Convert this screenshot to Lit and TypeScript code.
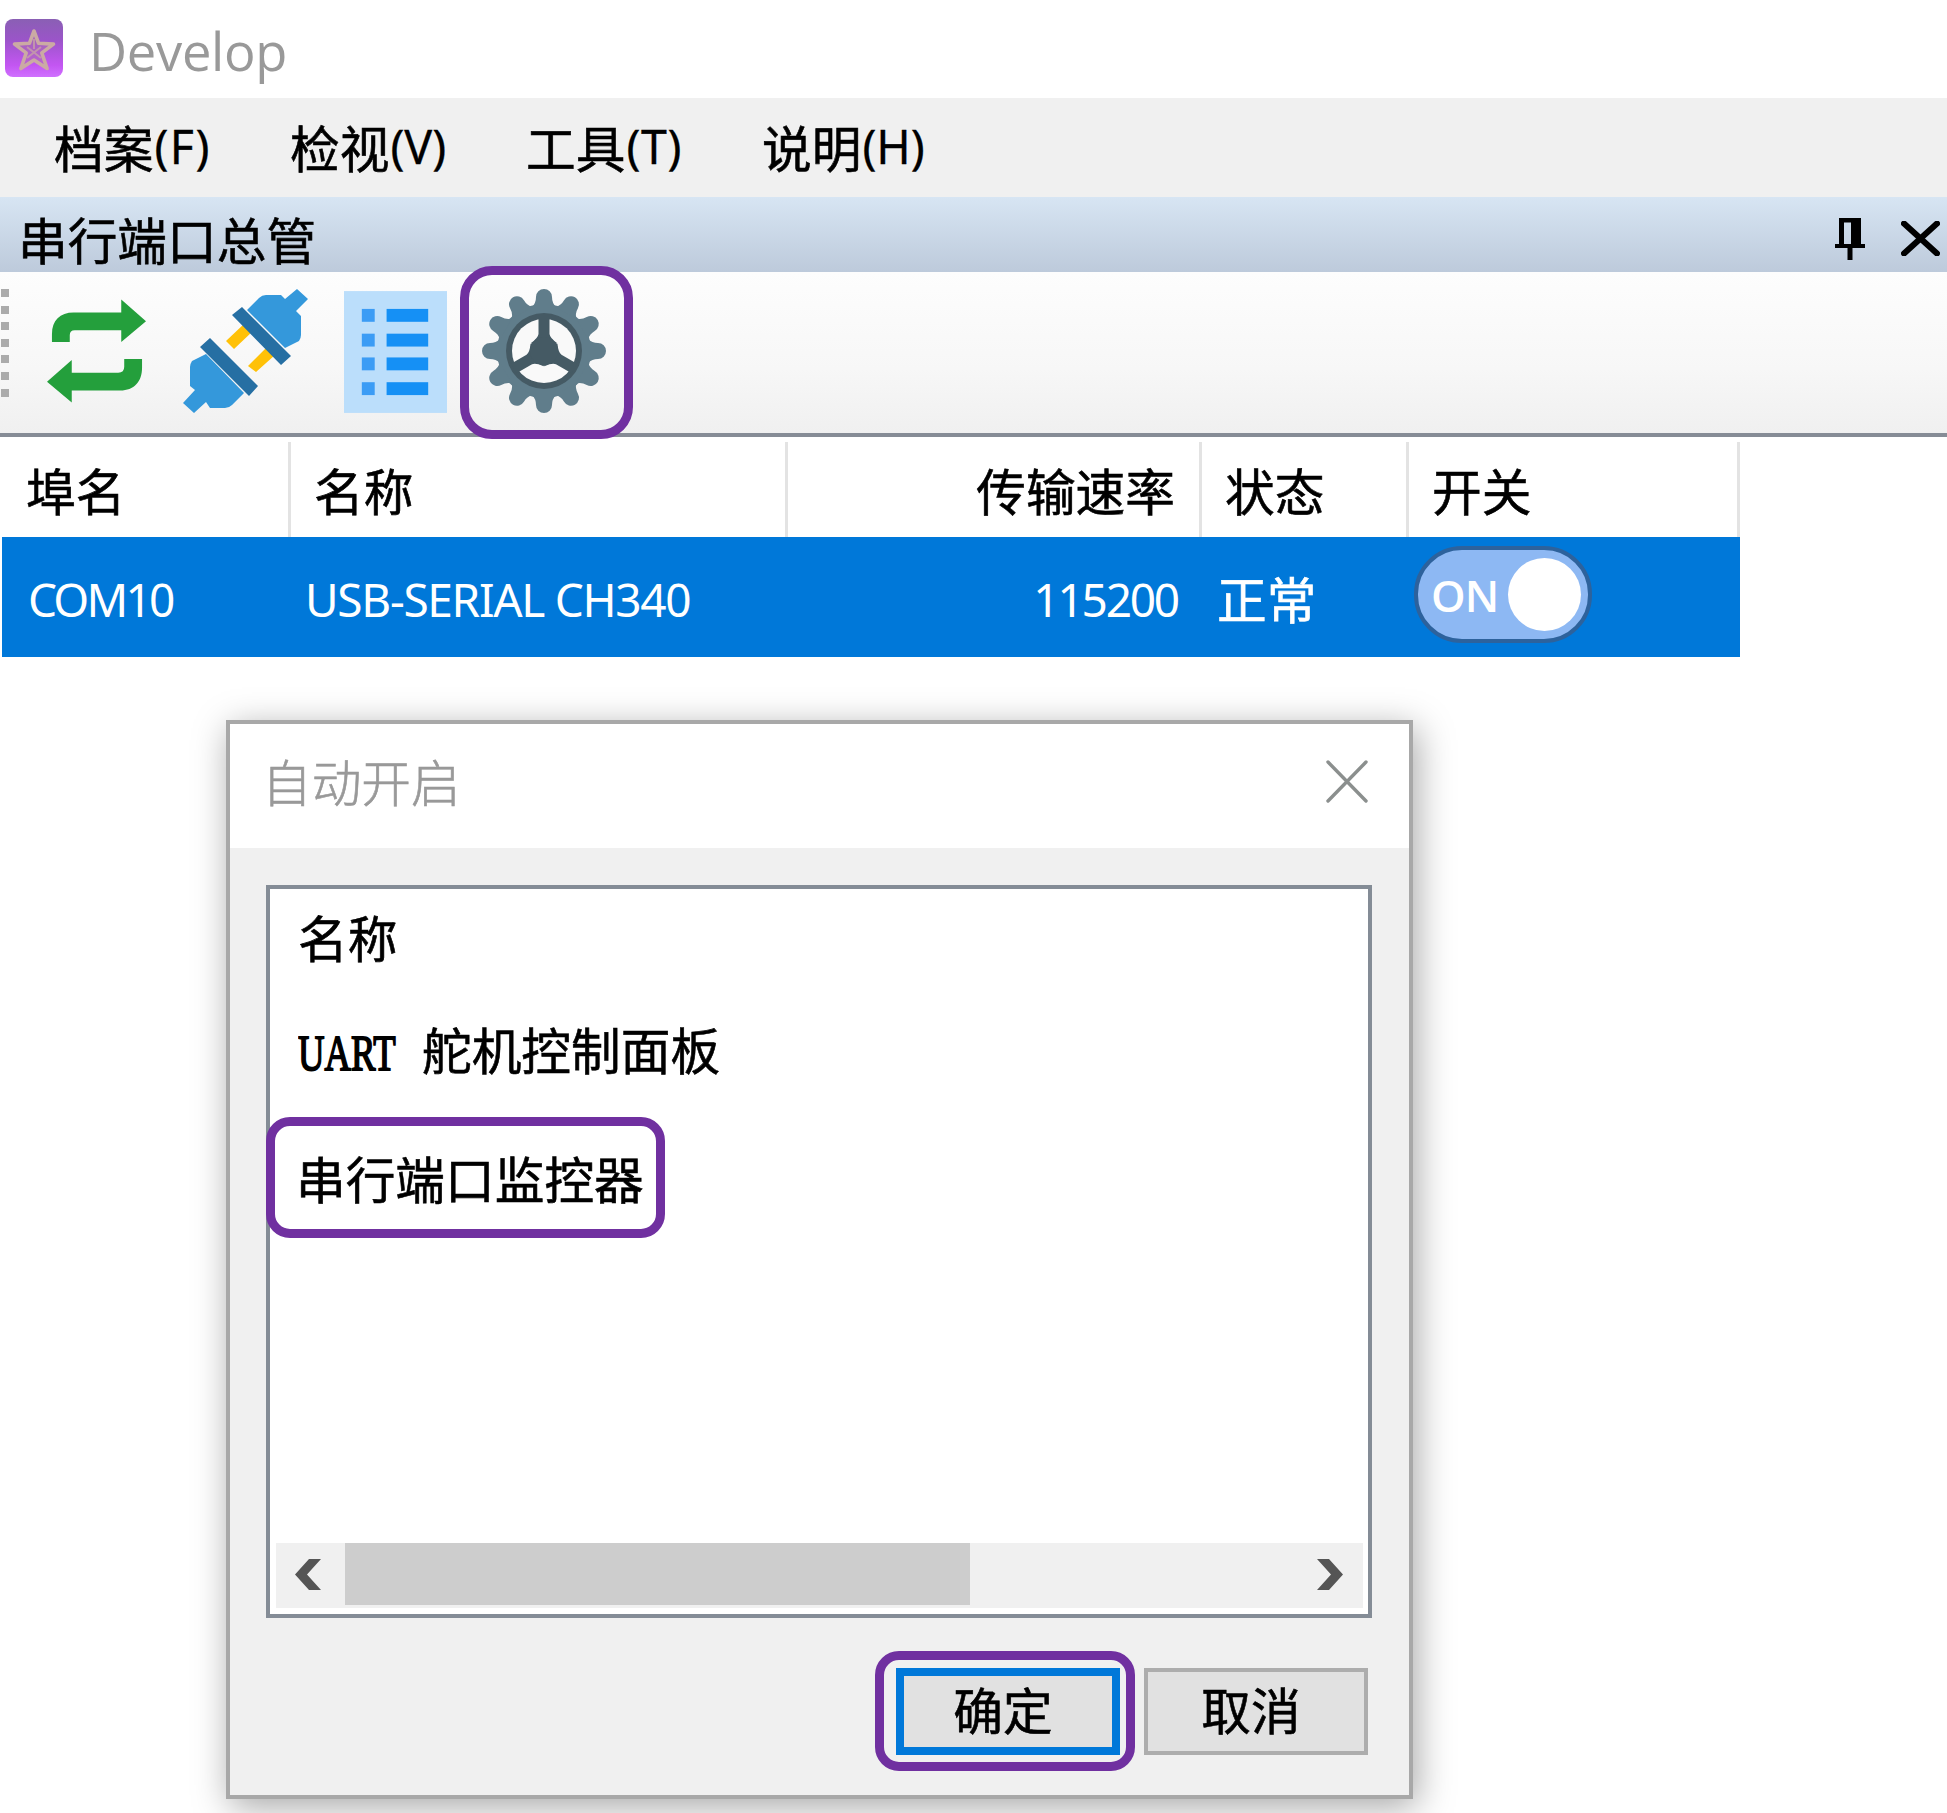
import { LitElement, html, svg, css } from "lit";
import { customElement, state } from "lit/decorators.js";

const teeth = Array.from({ length: 12 }, (_, i) => i * 30);

const starIcon = html`<svg class="star" viewBox="0 0 58 58">
  <defs>
    <linearGradient id="g" x1="0" y1="0" x2="0" y2="1">
      <stop offset="0" stop-color="#8a5fb4" /><stop offset=".35" stop-color="#9a55c8" />
      <stop offset=".8" stop-color="#c356f2" /><stop offset="1" stop-color="#d070ff" />
    </linearGradient>
  </defs>
  <rect width="58" height="58" rx="8" fill="url(#g)" />
  <path d="M29 12l4.600 12.300 14.900.8-11.700 8.800 5.300 15.600L29 41l-13.100 8.500 5.300-15.600-11.700-8.800 14.900-.8z"
    fill="#b070b0" fill-opacity=".5" stroke="#cbaaa4" stroke-width="3.600" stroke-linejoin="round" />
  <path d="M22 28l14 11M36 28L22 39M29 20v10" stroke="#cbaaa4" stroke-width="2" stroke-opacity=".7" fill="none" />
</svg>`;

const pinIcon = html`<svg class="pin" viewBox="0 0 30 42">
  <path d="M4 0h22v26h4v4H17.500v12h-5V30H0v-4h4zM9 4.500V26h7V4.500z" fill="#000" fill-rule="evenodd" />
</svg>`;

const closeIcon = html`<svg class="shut" viewBox="0 0 39 35">
  <path d="M3 2.500L36 32.500M36 2.500L3 32.500" stroke="#000" stroke-width="6" stroke-linecap="round" />
</svg>`;

const refreshIcon = html`<svg class="tool refresh" viewBox="0 0 100 104">
  <g fill="#249f3c">
    <path d="M5 43V35C5 21 13 13 27 13H75V0L100 22 75 43V31H28Q23 31 23 36V43z" />
    <path d="M96 60V69C96 83 88 92 74 92H25V104L0 83 25 61V74H72Q78 74 78 68V60z" />
  </g>
</svg>`;

const plugIcon = html`<svg class="tool plug" viewBox="0 0 125 124">
  <path d="M43 52L62 34 70 42 51 60zM65 77L84 58 92 66 73 83z" fill="#ffc107" />
  <g fill="#3498db">
    <path d="M64 21L76 9Q79 6 83 6H98L102 10 114 0 125 10 113 22 118 27V46Q118 49 116 52L102 59z" />
    <path d="M61 104L49 116Q46 119 42 119H27L23 113 11 124 0 114 12 101 7 97V78Q7 75 9 72L23 65z" />
  </g>
  <path d="M49 26L59 18 108 67 98 76zM17 58L27 49 75 97 66 107z" fill="#266fa3" />
</svg>`;

const listIcon = html`<svg class="tool list" viewBox="0 0 104 123">
  <rect width="104" height="123" fill="#bbdefb" />
  ${[18, 43, 67, 92].map(
    (y) => svg`<rect x="18" y=${y} width="13" height="13" fill="#3b9cf5"/><rect x="43" y=${y} width="42" height="13" fill="#1590f5"/>`
  )}
</svg>`;

const gearIcon = html`<svg class="tool gear" viewBox="-62 -62 124 124">
  <g fill="#607d8b">
    <circle r="47" />
    ${teeth.map((a) => svg`<path transform="rotate(${a})" d="M-12-44Q-8-48-8-54A8 8 0 0 1 8-54Q8-48 12-44z"/>`)}
  </g>
  <circle r="38" fill="#455a64" />
  <circle r="32" fill="#f9f9f9" />
  <g fill="#455a64">
    ${[0, 120, 240].map((a) => svg`<path transform="rotate(${a})" d="M-5.500-35H5.500V-17Q6-13 13-8L0 8-13-8Q-6-13-5.500-17z"/>`)}
    <circle r="14" />
  </g>
</svg>`;

@customElement("app-root")
export class AppRoot extends LitElement {
  @state() private menus = [
    ["档案", "F"],
    ["检视", "V"],
    ["工具", "T"],
    ["说明", "H"],
  ];

  static styles = css`
    :host {
      display: block;
      position: relative;
      width: 1947px;
      height: 1813px;
      overflow: hidden;
      background: #fff;
      color: #000;
      font: 49.700px/60px "Noto Sans CJK SC", sans-serif;
      -webkit-text-stroke: 0.6px currentColor;
      white-space: nowrap;
    }
    * { box-sizing: border-box; }
    svg { display: block; flex: none; }
    .caption { display: flex; align-items: center; height: 98px; padding-left: 5px; gap: 26px; }
    .star { width: 58px; height: 58px; margin-bottom: 2px; }
    .app { font: 52.500px/60px "Open Sans", sans-serif; color: #999; margin-top: 3px; letter-spacing: -0.3px; -webkit-text-stroke: 0; }
    .menubar { display: flex; height: 99px; padding: 18px 0 0 54px; background: #f0f0f0; }
    .menu { display: flex; gap: 1px; width: 236px; }
    .key { display: flex; justify-content: space-between; width: 55px; font: 46.500px/60px "Noto Sans", sans-serif; -webkit-text-stroke: 0.3px; }
    .menu:last-child .key { width: 60px; }
    .panel { display: flex; align-items: center; height: 75px; padding: 0 7px 0 18px; background: linear-gradient(#d7e5f3, #bdcadb); }
    .panel-name { flex: 1; margin-top: 6px; }
    .pin { width: 30px; height: 42px; margin-right: 36px; margin-top: 8px; }
    .shut { width: 39px; height: 35px; margin-top: 8px; }
    .toolbar { display: flex; align-items: flex-start; height: 165px; padding: 17px 0 0 1px; border-bottom: 4px solid #868c96; background: linear-gradient(#fdfdfd, #f7f7f7 60%, #f0f0f0); }
    .grip { display: flex; flex-direction: column; gap: 8.600px; width: 8px; }
    .dot { height: 8px; background: #ababab; }
    .refresh { width: 99px; height: 104px; margin: 10px 0 0 38px; }
    .plug { width: 125px; height: 124px; margin-left: 37px; }
    .list { width: 103px; height: 122px; margin: 2px 0 0 36px; }
    .gearbox { position: relative; margin-left: 35px; }
    .gear { width: 124px; height: 124px; }
    .mark { position: absolute; border: 9px solid #7030a0; border-radius: 24px; }
    .gearbox .mark { inset: -23px -27px -26px -22px; border-radius: 32px; }
    .grid { display: grid; grid-template-columns: 291px 497px 414px 207px 331px; width: 1740px; }
    .th { height: 95px; margin-top: 5px; padding: 17px 0 0 23px; border-right: 3px solid #e3e3e3; }
    .th:first-child { padding-left: 26px; }
    .num { text-align: right; padding-right: 24px; }
    .row { margin-left: 2px; width: 1738px; grid-template-columns: 289px 497px 414px 207px 331px; height: 120px; background: #0078d9; color: #fff; }
    .td { padding: 30px 0 0 15px; }
    .lat { font: 46px/60px "Noto Sans", sans-serif; letter-spacing: -1.300px; padding: 32px 0 0 14px; -webkit-text-stroke: 0; }
    .row .num { padding-right: 24px; letter-spacing: -2.200px; }
    .com { padding-left: 26px; letter-spacing: -2.800px; }
    .switch { display: flex; align-items: center; justify-content: space-between; width: 178px; height: 97px; margin: 9px 0 0 5px; padding: 0 7px 0 13px; border: 4px solid #2d629c; border-radius: 48px; background: #8db8f3; }
    .on { font: 600 44px/60px "Open Sans", sans-serif; letter-spacing: -1px; -webkit-text-stroke: 0; }
    .knob { width: 73px; height: 73px; border-radius: 50%; background: #fff; }
    .dialog { position: absolute; left: 226px; top: 720px; width: 1187px; height: 1079px; border: 4px solid #a8a8a8; background: #f0f0f0; box-shadow: 4px 8px 34px rgba(0, 0, 0, .35); }
    .dlg-title { display: flex; justify-content: space-between; height: 124px; padding: 26px 41px 0 32px; background: #fff; color: #999; font-weight: 300; }
    .dlg-close { width: 42px; height: 43px; margin-top: 10px; }
    .listbox { display: flex; flex-direction: column; width: 1106px; height: 733px; margin: 37px 0 0 36px; padding: 0 5px 6px 6px; border: 4px solid #848c96; background: #fff; }
    .item { position: relative; margin-left: 22px; width: 360px; }
    .item.head { margin-top: 17px; }
    .item.uart { display: flex; margin-top: 52px; }
    .wide { width: 124px; }
    .squeeze { display: inline-block; margin-top: -2px; font: 51px/60px "Liberation Serif", serif; transform: scaleX(.72); transform-origin: 0 50%; -webkit-text-stroke: 1.800px #000; }
    .item.serial { margin: 65px 0 0 20px; }
    .item.serial span { position: relative; top: -1px; }
    .item .mark { left: -30px; top: -31px; width: 399px; height: 121px; }
    .scroll { display: flex; align-items: center; margin-top: auto; height: 65px; padding: 0 20px 0 19px; background: #f0f0f0; }
    .thumb { width: 625px; height: 62px; margin: 0 auto 3px 24px; background: #cdcdcd; }
    .arrow { width: 26px; height: 31px; margin-bottom: 2px; }
    .actions { display: flex; justify-content: flex-end; gap: 24px; margin: 50px 41px 0 0; }
    .btn { position: relative; width: 224px; height: 87px; padding-right: 10px; border: 4px solid #adadad; background: #e1e1e1; text-align: center; line-height: 72px; }
    .ok { border: 8px solid #0078d9; line-height: 64px; }
    .ok .mark { inset: -25px -23px -24px -29px; }
  `;

  render() {
    return html`
      <div class="caption">${starIcon}<span class="app">Develop</span></div>
      <div class="menubar">
        ${this.menus.map(
          ([name, key]) =>
            html`<div class="menu"><span>${name}</span><span class="key"><span>(</span><span>${key}</span><span>)</span></span></div>`
        )}
      </div>
      <div class="panel"><span class="panel-name">串行端口总管</span>${pinIcon}${closeIcon}</div>
      <div class="toolbar">
        <div class="grip">${Array.from({ length: 7 }, () => html`<div class="dot"></div>`)}</div>
        ${refreshIcon}${plugIcon}${listIcon}
        <div class="gearbox">${gearIcon}<div class="mark"></div></div>
      </div>
      <div class="grid">
        <div class="th">埠名</div>
        <div class="th">名称</div>
        <div class="th num">传输速率</div>
        <div class="th">状态</div>
        <div class="th">开关</div>
      </div>
      <div class="grid row">
        <div class="td lat com">COM10</div>
        <div class="td lat">USB-SERIAL CH340</div>
        <div class="td lat num">115200</div>
        <div class="td">正常</div>
        <div class="switch"><span class="on">ON</span><span class="knob"></span></div>
      </div>
      <div class="dialog">
        <div class="dlg-title">
          <span>自动开启</span>
          <svg class="dlg-close" viewBox="0 0 42 43">
            <path d="M2 2L40 41M40 2L2 41" stroke="#8b8f8e" stroke-width="3.400" stroke-linecap="round" />
          </svg>
        </div>
        <div class="listbox">
          <div class="item head">名称</div>
          <div class="item uart"><span class="wide"><span class="squeeze">UART</span></span><span>舵机控制面板</span></div>
          <div class="item serial"><span>串行端口监控器</span><div class="mark"></div></div>
          <div class="scroll">
            <svg class="arrow" viewBox="0 0 26 31"><path d="M14 0H26L12 15.500 26 31H14L0 15.500z" fill="#555" /></svg>
            <div class="thumb"></div>
            <svg class="arrow" viewBox="0 0 26 31"><path d="M12 0H0L14 15.500 0 31H12L26 15.500z" fill="#555" /></svg>
          </div>
        </div>
        <div class="actions">
          <div class="btn ok">确定<div class="mark"></div></div>
          <div class="btn">取消</div>
        </div>
      </div>
    `;
  }
}
